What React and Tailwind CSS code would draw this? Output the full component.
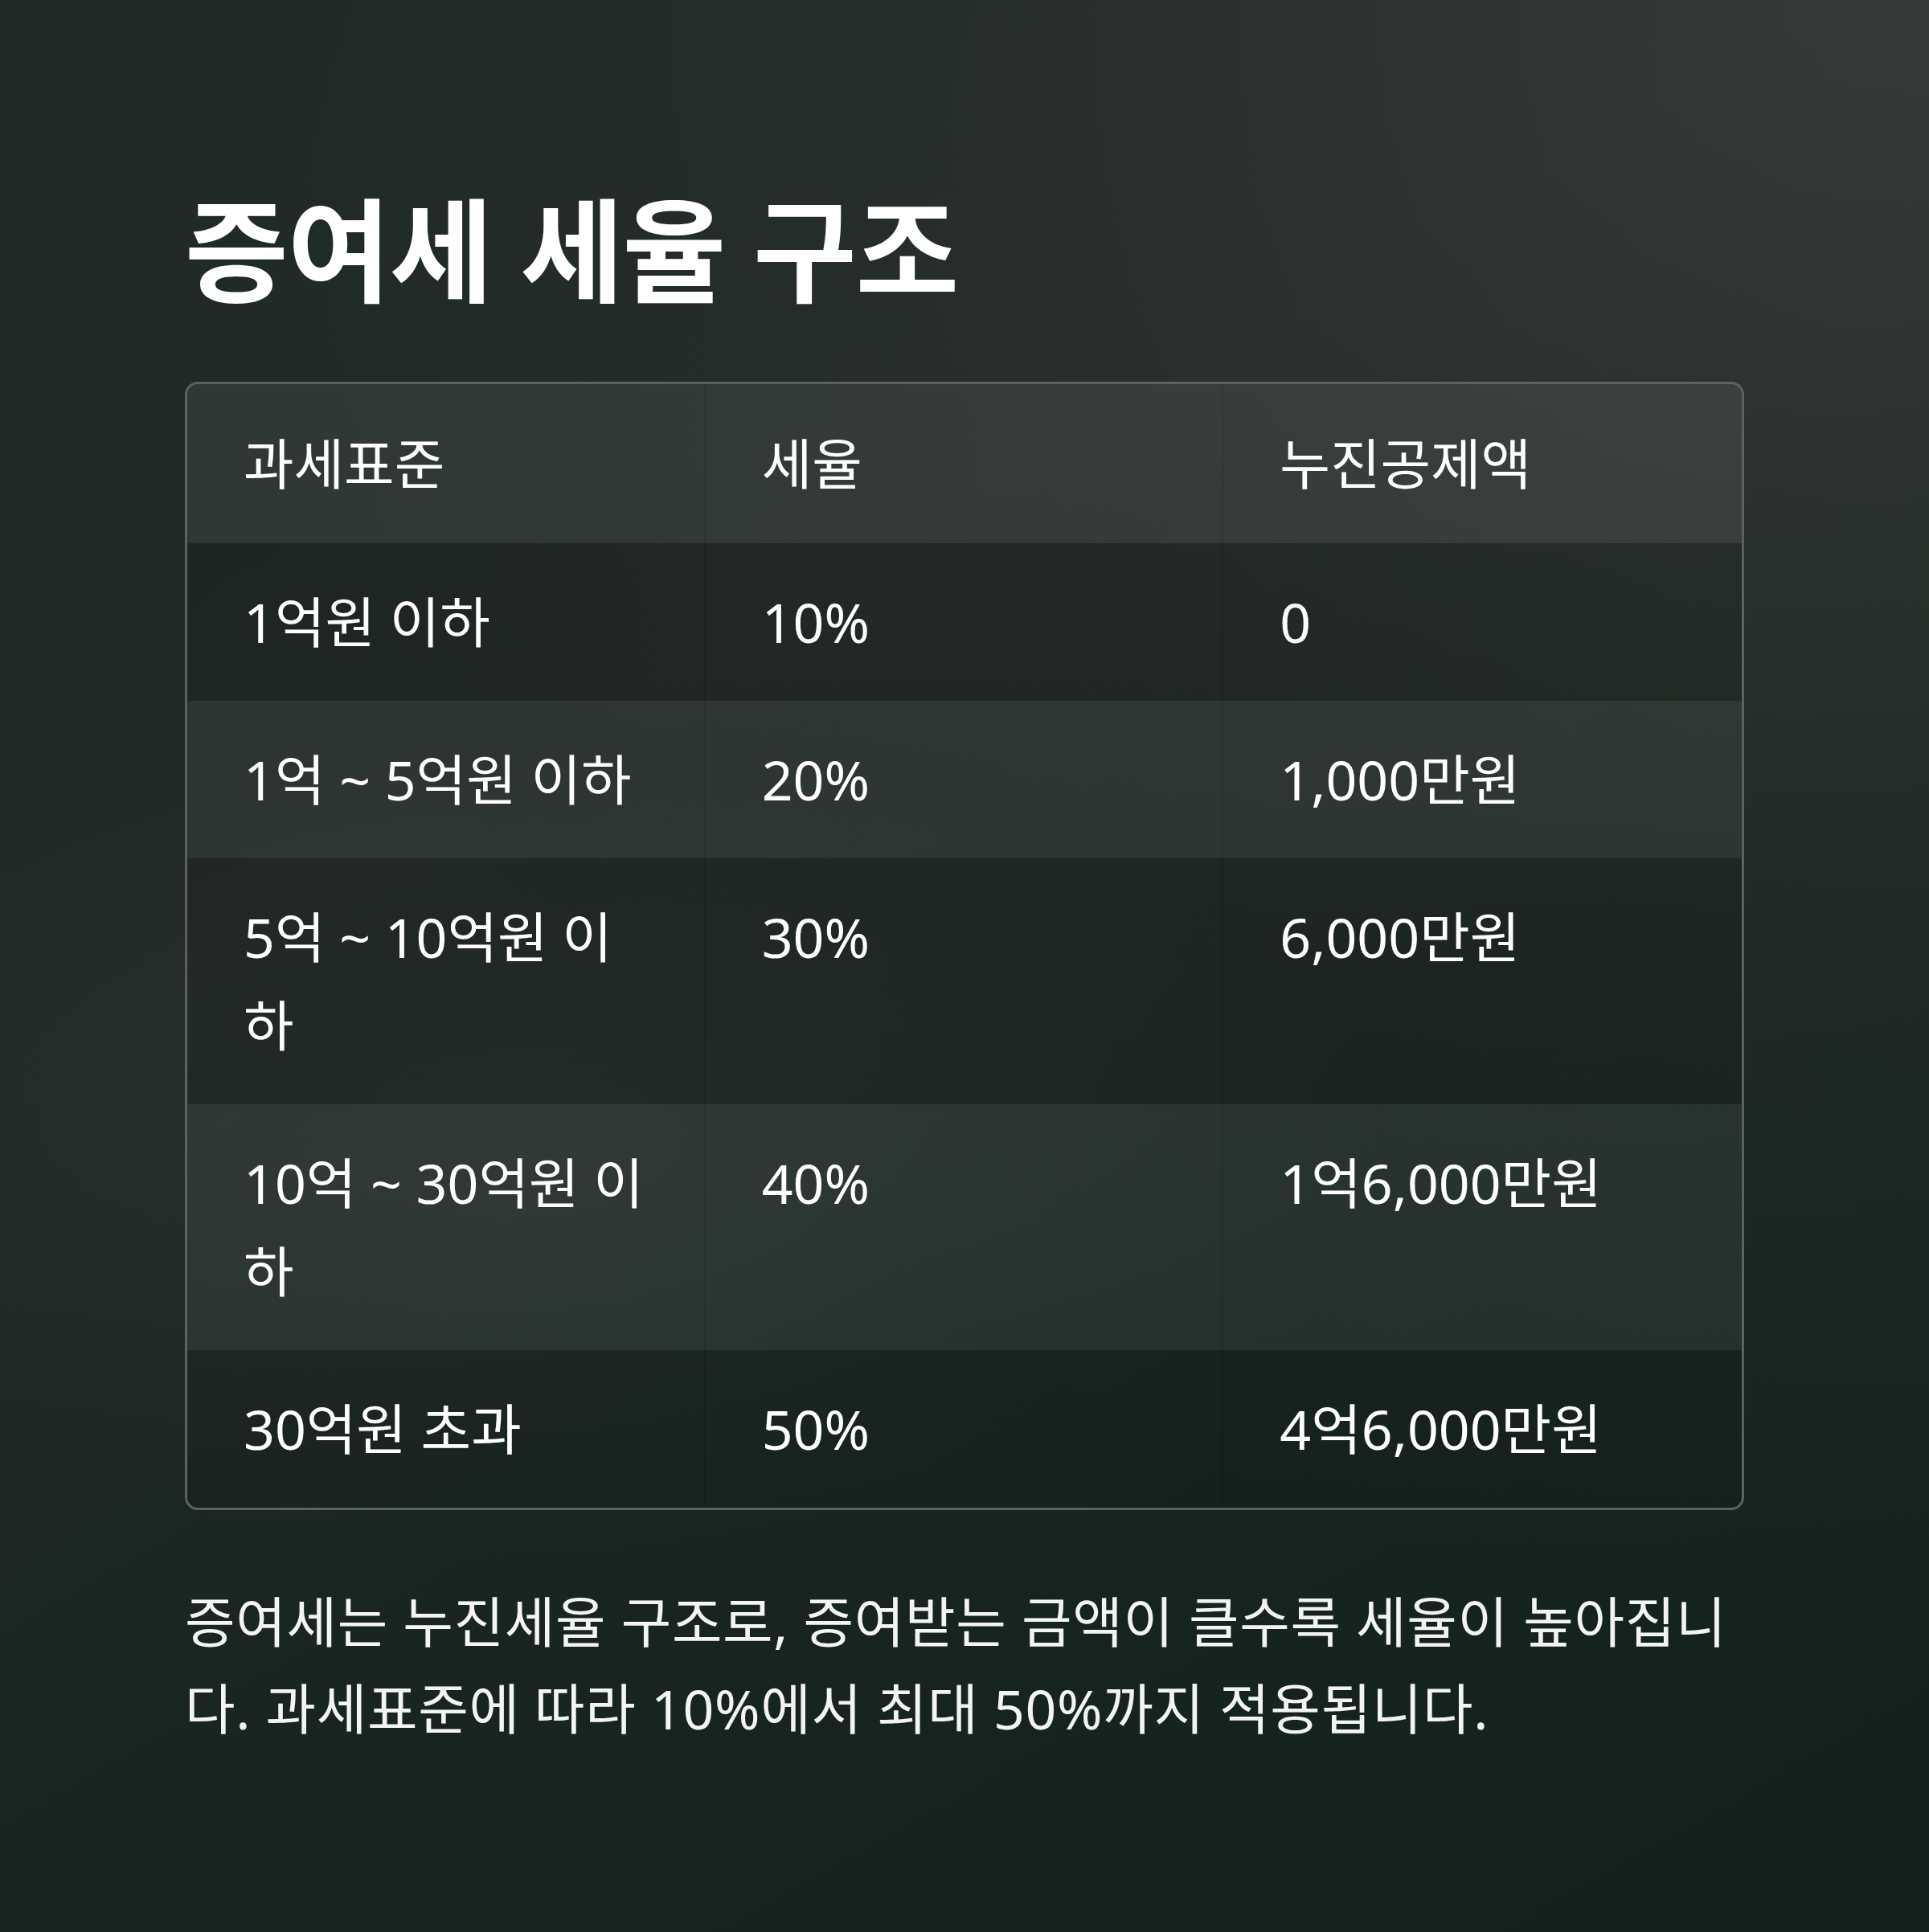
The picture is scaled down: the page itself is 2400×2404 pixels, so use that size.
import React from 'react';

const ROWS = [
  ['1억원 이하', '10%', '0'],
  ['1억 ~ 5억원 이하', '20%', '1,000만원'],
  ['5억 ~ 10억원 이하', '30%', '6,000만원'],
  ['10억 ~ 30억원 이하', '40%', '1억6,000만원'],
  ['30억원 초과', '50%', '4억6,000만원'],
];

const HEAD = ['과세표준', '세율', '누진공제액'];

const App = () => {
  return (
    <div className="w-[2400px] h-[2404px] overflow-hidden bg-[linear-gradient(150deg,#1f2a26_0%,#222a27_35%,#19261f_60%,#12211d_100%)] font-['Noto_Sans','Noto_Sans_CJK_KR',sans-serif] text-white">
      <div className="w-full h-full bg-[radial-gradient(ellipse_at_top_right,rgba(72,72,70,0.55)_0%,rgba(60,60,58,0.2)_35%,transparent_60%)]">
        <div className="w-full h-full flex flex-col px-[230px] pt-[227px] bg-[radial-gradient(ellipse_60%_30%_at_30%_60%,rgba(80,88,84,0.16)_0%,transparent_70%)]">
          {/* 제목 */}
          <h1 className="text-[140px] font-bold leading-[1.2] tracking-[-0.01em] mb-[80px]">
            증여세 세율 구조
          </h1>

          {/* 세율 표 */}
          <div className="border-[3px] border-[#5b625f] rounded-[16px] overflow-hidden">
            <div className="grid grid-cols-3 bg-white/[0.065]">
              {HEAD.map((h, i) => (
                <div
                  key={h}
                  className={`px-[70px] py-[44px] text-[68px] leading-[110px] ${i < 2 ? 'border-r-2 border-black/10' : ''}`}
                >
                  {h}
                </div>
              ))}
            </div>
            {ROWS.map((row, r) => (
              <div
                key={row[0]}
                className={`grid grid-cols-3 ${r % 2 === 0 ? 'bg-black/[0.08]' : 'bg-white/[0.05]'}`}
              >
                {row.map((cell, i) => (
                  <div
                    key={i}
                    className={`px-[70px] py-[43px] text-[68px] leading-[110px] ${i < 2 ? 'border-r-2 border-black/10' : ''}`}
                  >
                    {cell}
                  </div>
                ))}
              </div>
            ))}
          </div>

          {/* 설명 */}
          <p className="mt-[85px] text-[68px] leading-[108px] tracking-[0.01em] text-white/95">
            증여세는 누진세율 구조로, 증여받는 금액이 클수록 세율이 높아집니다. 과세표준에 따라 10%에서 최대 50%까지 적용됩니다.
          </p>
        </div>
      </div>
    </div>
  );
};

export default App;
